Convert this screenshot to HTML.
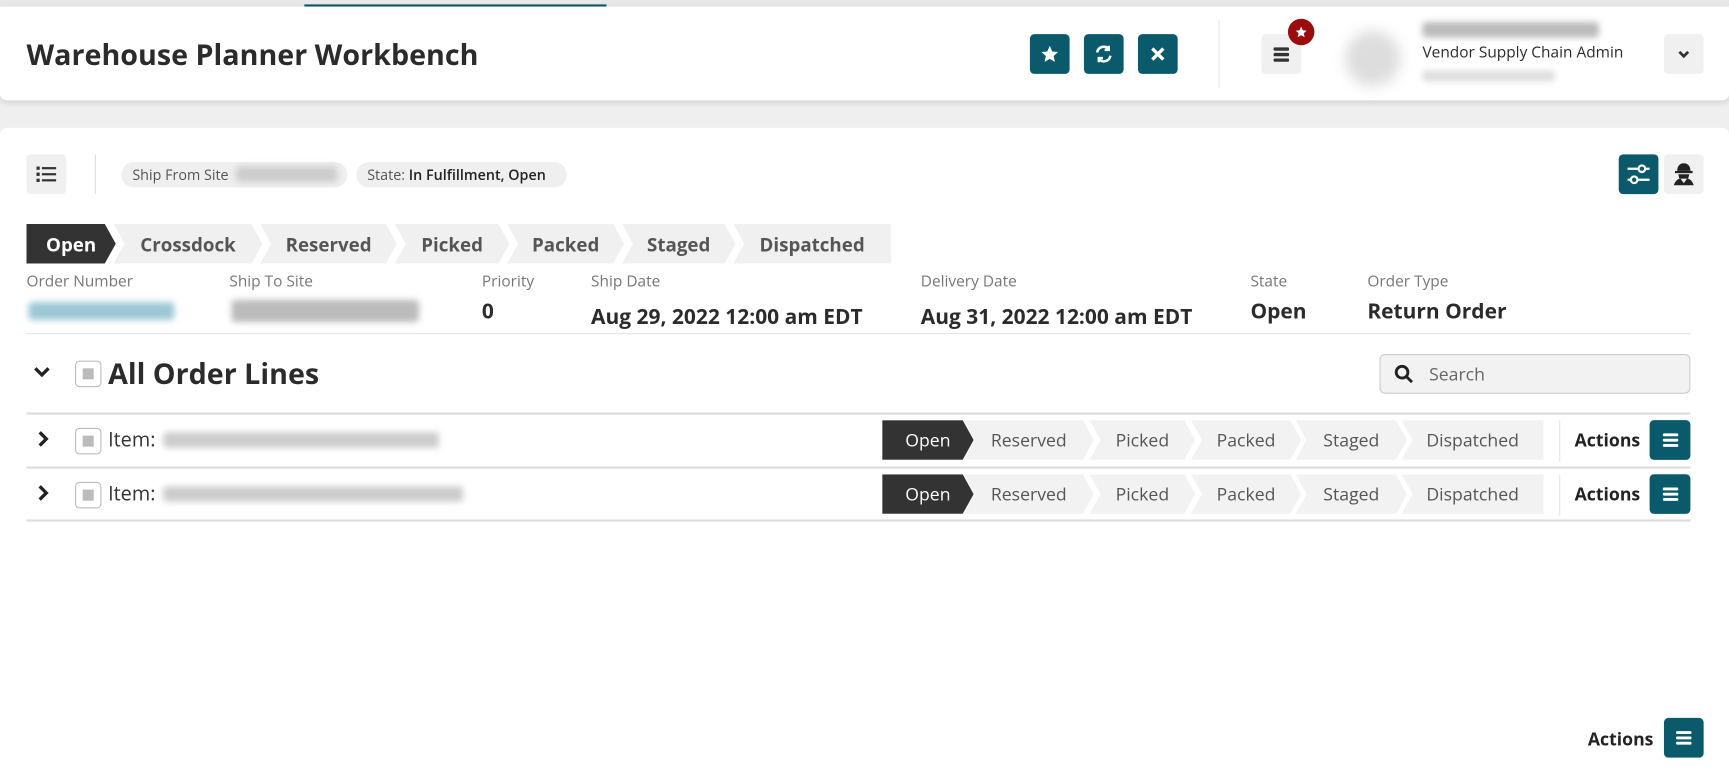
<!DOCTYPE html>
<html><head><style>
html,body{margin:0;padding:0;width:1729px;height:783px;overflow:hidden;background:#f0f0f0}
#w{position:absolute;left:0;top:0;width:1568px;height:710px;transform:scale(1.10268,1.10282);transform-origin:0 0;font-family:"Open Sans","Liberation Sans",sans-serif;color:#2b2b2b;background:#efefef}
.a{position:absolute}
.tb{position:absolute;width:36px;height:36px;border-radius:4px;background:#0b5a6b;display:flex;align-items:center;justify-content:center}
.gb{position:absolute;width:36px;height:36px;border-radius:4px;background:#f0f0f0;display:flex;align-items:center;justify-content:center}
.bl{position:absolute;filter:blur(3px);border-radius:3px}
.lab{position:absolute;top:246px;font-size:14px;color:#777}
.val{position:absolute;top:269px;font-size:19px;font-weight:bold;color:#2b2b2b}
.st{position:absolute;top:203px;height:36px;background:#f0f0f0;font-size:17px;font-weight:bold;color:#555;display:flex;align-items:center;justify-content:center;clip-path:polygon(0 0,calc(100% - 10px) 0,100% 50%,calc(100% - 10px) 100%,0 100%,10px 50%)}
.ss{position:absolute;height:36px;background:#f2f2f2;font-size:16px;color:#555;display:flex;align-items:center;justify-content:center;clip-path:polygon(0 0,calc(100% - 10px) 0,100% 50%,calc(100% - 10px) 100%,0 100%,10px 50%)}
.cb{position:absolute;width:22px;height:22px;border:1px solid #bbb;border-radius:4px;background:#fff}
.cb:after{content:"";position:absolute;left:6px;top:6px;width:10px;height:10px;background:#bbb}
.hl{position:absolute;left:24px;width:1509px;height:2px;background:#ddd}
</style></head><body><div id="w">
<div class="a" style="left:0;top:0;width:1568px;height:6px;background:#e8e8e8"></div>
<div class="a" style="left:276px;top:4px;width:274px;height:2px;background:#0b5a6b"></div>
<div class="a" style="left:0;top:6px;width:1568px;height:85px;background:#fff;border-radius:0 0 6px 6px;box-shadow:0 2px 6px rgba(0,0,0,.12)"></div>
<div class="a" style="left:24px;top:31px;font-size:26px;font-weight:bold;color:#2b2b2b">Warehouse Planner Workbench</div>
<div class="tb" style="left:934px;top:31px"><svg width="18" height="18" viewBox="0 0 24 24"><path fill="#fff" d="M12 2l3 7 7 .6-5.3 4.7 1.6 7.2L12 17.8 5.7 21.5l1.6-7.2L2 9.6 9 9z"/></svg></div>
<div class="tb" style="left:983px;top:31px"><svg width="18" height="18" viewBox="0 0 24 24" fill="none" stroke="#fff" stroke-width="3"><path d="M4 10a8 8 0 0 1 14-4M20 14a8 8 0 0 1-14 4"/><path d="M18 2v5h-5M6 22v-5h5"/></svg></div>
<div class="tb" style="left:1032px;top:31px"><svg width="14" height="14" viewBox="0 0 14 14" stroke="#fff" stroke-width="3"><path d="M2 2l10 10M12 2L2 12"/></svg></div>
<div class="a" style="left:1105px;top:18px;width:1px;height:62px;background:#e5e5e5"></div>
<div class="gb" style="left:1144px;top:31px"><svg width="16" height="16" viewBox="0 0 16 16" fill="#333"><rect x="1" y="2" width="14" height="3" rx="1"/><rect x="1" y="7" width="14" height="3" rx="1"/><rect x="1" y="12" width="14" height="3" rx="1"/></svg></div>
<div class="a" style="left:1168px;top:17px;width:24px;height:24px;border-radius:50%;background:#9b0d0d;display:flex;align-items:center;justify-content:center"><svg width="12" height="12" viewBox="0 0 24 24"><path fill="#fff" d="M12 2l3 7 7 .6-5.3 4.7 1.6 7.2L12 17.8 5.7 21.5l1.6-7.2L2 9.6 9 9z"/></svg></div>
<div class="bl" style="left:1220px;top:28px;width:50px;height:50px;border-radius:50%;background:#ddd;filter:blur(6px)"></div>
<div class="bl" style="left:1290px;top:20px;width:160px;height:14px;background:#bbb"></div>
<div class="a" style="left:1290px;top:38px;font-size:14px;color:#2b2b2b">Vendor Supply Chain Admin</div>
<div class="bl" style="left:1290px;top:64px;width:120px;height:10px;background:#ddd"></div>
<div class="gb" style="left:1509px;top:31px"><svg width="12" height="12" viewBox="0 0 12 12" fill="none" stroke="#333" stroke-width="2.5"><path d="M2 4l4 4 4-4"/></svg></div>
<div class="a" style="left:0;top:116px;width:1568px;height:594px;background:#fff;border-radius:6px 6px 0 0"></div>
<div class="gb" style="left:24px;top:140px"><svg width="18" height="16" viewBox="0 0 18 16" fill="#333"><rect x="0" y="1" width="3" height="3"/><rect x="5" y="1.5" width="13" height="2"/><rect x="0" y="6.5" width="3" height="3"/><rect x="5" y="7" width="13" height="2"/><rect x="0" y="12" width="3" height="3"/><rect x="5" y="12.5" width="13" height="2"/></svg></div>
<div class="a" style="left:86px;top:140px;width:1px;height:36px;background:#ddd"></div>
<div class="a" style="left:110px;top:147px;width:205px;height:23px;border-radius:12px;background:#efefef"></div>
<div class="a" style="left:120px;top:149px;font-size:13px;color:#555">Ship From Site</div>
<div class="bl" style="left:214px;top:151px;width:92px;height:14px;background:#ccc"></div>
<div class="a" style="left:323px;top:147px;width:191px;height:23px;border-radius:12px;background:#efefef"></div>
<div class="a" style="left:333px;top:149px;font-size:13px;color:#555">State: <span style="color:#222;font-weight:600">In Fulfillment, Open</span></div>
<div class="tb" style="left:1468px;top:140px"><svg width="22" height="20" viewBox="0 0 22 20" fill="none" stroke="#fff" stroke-width="2"><path d="M1 5h20M1 15h20"/><circle cx="14" cy="5" r="3" fill="#0b5a6b"/><circle cx="7" cy="15" r="3" fill="#0b5a6b"/></svg></div>
<div class="gb" style="left:1509px;top:140px"><svg width="22" height="22" viewBox="0 0 22 22" fill="#222"><path d="M5 8c0-5 3-7 6-7s6 2 6 7z"/><rect x="3" y="8" width="16" height="2"/><path d="M6 11h10l-1 4H7z"/><path d="M2 21c1-4 4-6 6-6l3 4 3-4c2 0 5 2 6 6z"/></svg></div>
<div class="st" style="left:24px;width:81px;background:#333;color:#fff;clip-path:polygon(0 0,calc(100% - 10px) 0,100% 50%,calc(100% - 10px) 100%,0 100%)">Open</div>
<div class="st" style="left:103px;width:135px">Crossdock</div>
<div class="st" style="left:236px;width:124px">Reserved</div>
<div class="st" style="left:358px;width:104px">Picked</div>
<div class="st" style="left:460px;width:106px">Packed</div>
<div class="st" style="left:564px;width:103px">Staged</div>
<div class="st" style="left:665px;width:143px;clip-path:polygon(0 0,100% 0,100% 100%,0 100%,10px 50%)">Dispatched</div>
<div class="lab" style="left:24px">Order Number</div><div class="bl" style="left:26px;top:274px;width:132px;height:16px;background:#9cc8d4"></div>
<div class="lab" style="left:208px">Ship To Site</div><div class="bl" style="left:210px;top:272px;width:170px;height:20px;background:#bbb"></div>
<div class="lab" style="left:437px">Priority</div><div class="val" style="left:437px">0</div>
<div class="lab" style="left:536px">Ship Date</div><div class="val" style="left:536px;top:274px">Aug 29, 2022 12:00 am EDT</div>
<div class="lab" style="left:835px">Delivery Date</div><div class="val" style="left:835px;top:274px">Aug 31, 2022 12:00 am EDT</div>
<div class="lab" style="left:1134px">State</div><div class="val" style="left:1134px">Open</div>
<div class="lab" style="left:1240px">Order Type</div><div class="val" style="left:1240px">Return Order</div>
<div class="a" style="left:24px;top:302px;width:1509px;height:1px;background:#e5e5e5"></div>
<svg class="a" style="left:30px;top:330px" width="16" height="14" viewBox="0 0 16 14" fill="none" stroke="#222" stroke-width="3"><path d="M2 4l6 6 6-6"/></svg>
<div class="cb" style="left:68px;top:327px"></div>
<div class="a" style="left:98px;top:320px;font-size:26px;font-weight:bold;color:#2b2b2b">All Order Lines</div>
<div class="a" style="left:1251px;top:321px;width:280px;height:34px;border:1px solid #ccc;border-radius:5px;background:#f2f2f2"></div>
<svg class="a" style="left:1264px;top:330px" width="18" height="18" viewBox="0 0 18 18" fill="none" stroke="#222" stroke-width="2.6"><circle cx="7.5" cy="7.5" r="5.3"/><path d="M11.5 11.5l5 5"/></svg>
<div class="a" style="left:1296px;top:328px;font-size:16px;color:#666">Search</div>
<div class="hl" style="top:374px"></div><div class="hl" style="top:423px"></div><div class="hl" style="top:471px"></div>
<!-- rows -->
<svg class="a" style="left:33px;top:390px" width="12" height="16" viewBox="0 0 12 16" fill="none" stroke="#222" stroke-width="3"><path d="M3 2l6 6-6 6"/></svg>
<div class="cb" style="left:68px;top:388px"></div>
<div class="a" style="left:98px;top:387px;font-size:18px;color:#333">Item:</div><div class="bl" style="left:148px;top:392px;width:250px;height:14px;background:#ccc"></div>
<svg class="a" style="left:33px;top:439px" width="12" height="16" viewBox="0 0 12 16" fill="none" stroke="#222" stroke-width="3"><path d="M3 2l6 6-6 6"/></svg>
<div class="cb" style="left:68px;top:437px"></div>
<div class="a" style="left:98px;top:436px;font-size:18px;color:#333">Item:</div><div class="bl" style="left:148px;top:441px;width:272px;height:14px;background:#ccc"></div>
<div id="r1" class="a" style="left:0;top:381px;width:1568px;height:36px">
<div class="ss" style="left:800px;width:83px;background:#333;color:#fff;clip-path:polygon(0 0,calc(100% - 10px) 0,100% 50%,calc(100% - 10px) 100%,0 100%)">Open</div>
<div class="ss" style="left:874px;width:118px">Reserved</div>
<div class="ss" style="left:988px;width:96px">Picked</div>
<div class="ss" style="left:1080px;width:100px">Packed</div>
<div class="ss" style="left:1175px;width:101px">Staged</div>
<div class="ss" style="left:1271px;width:129px;clip-path:polygon(0 0,100% 0,100% 100%,0 100%,10px 50%)">Dispatched</div>
<div class="a" style="left:1414px;top:0;width:1px;height:38px;background:#e5e5e5"></div>
<div class="a" style="left:1428px;top:7px;font-size:16px;font-weight:bold;color:#222">Actions</div>
<div class="tb" style="left:1496px;top:0;width:37px"><svg width="16" height="16" viewBox="0 0 16 16" fill="#fff"><rect x="1" y="2" width="14" height="2.6" rx="1"/><rect x="1" y="6.8" width="14" height="2.6" rx="1"/><rect x="1" y="11.6" width="14" height="2.6" rx="1"/></svg></div>
</div>
<div class="a" style="left:0;top:430px;width:1568px;height:36px">
<div class="ss" style="left:800px;width:83px;background:#333;color:#fff;clip-path:polygon(0 0,calc(100% - 10px) 0,100% 50%,calc(100% - 10px) 100%,0 100%)">Open</div>
<div class="ss" style="left:874px;width:118px">Reserved</div>
<div class="ss" style="left:988px;width:96px">Picked</div>
<div class="ss" style="left:1080px;width:100px">Packed</div>
<div class="ss" style="left:1175px;width:101px">Staged</div>
<div class="ss" style="left:1271px;width:129px;clip-path:polygon(0 0,100% 0,100% 100%,0 100%,10px 50%)">Dispatched</div>
<div class="a" style="left:1414px;top:0;width:1px;height:38px;background:#e5e5e5"></div>
<div class="a" style="left:1428px;top:7px;font-size:16px;font-weight:bold;color:#222">Actions</div>
<div class="tb" style="left:1496px;top:0;width:37px"><svg width="16" height="16" viewBox="0 0 16 16" fill="#fff"><rect x="1" y="2" width="14" height="2.6" rx="1"/><rect x="1" y="6.8" width="14" height="2.6" rx="1"/><rect x="1" y="11.6" width="14" height="2.6" rx="1"/></svg></div>
</div>
<div class="a" style="left:1440px;top:659px;font-size:16px;font-weight:bold;color:#222">Actions</div>
<div class="tb" style="left:1509px;top:651px"><svg width="16" height="16" viewBox="0 0 16 16" fill="#fff"><rect x="1" y="2" width="14" height="2.6" rx="1"/><rect x="1" y="6.8" width="14" height="2.6" rx="1"/><rect x="1" y="11.6" width="14" height="2.6" rx="1"/></svg></div>
</div></body></html>
